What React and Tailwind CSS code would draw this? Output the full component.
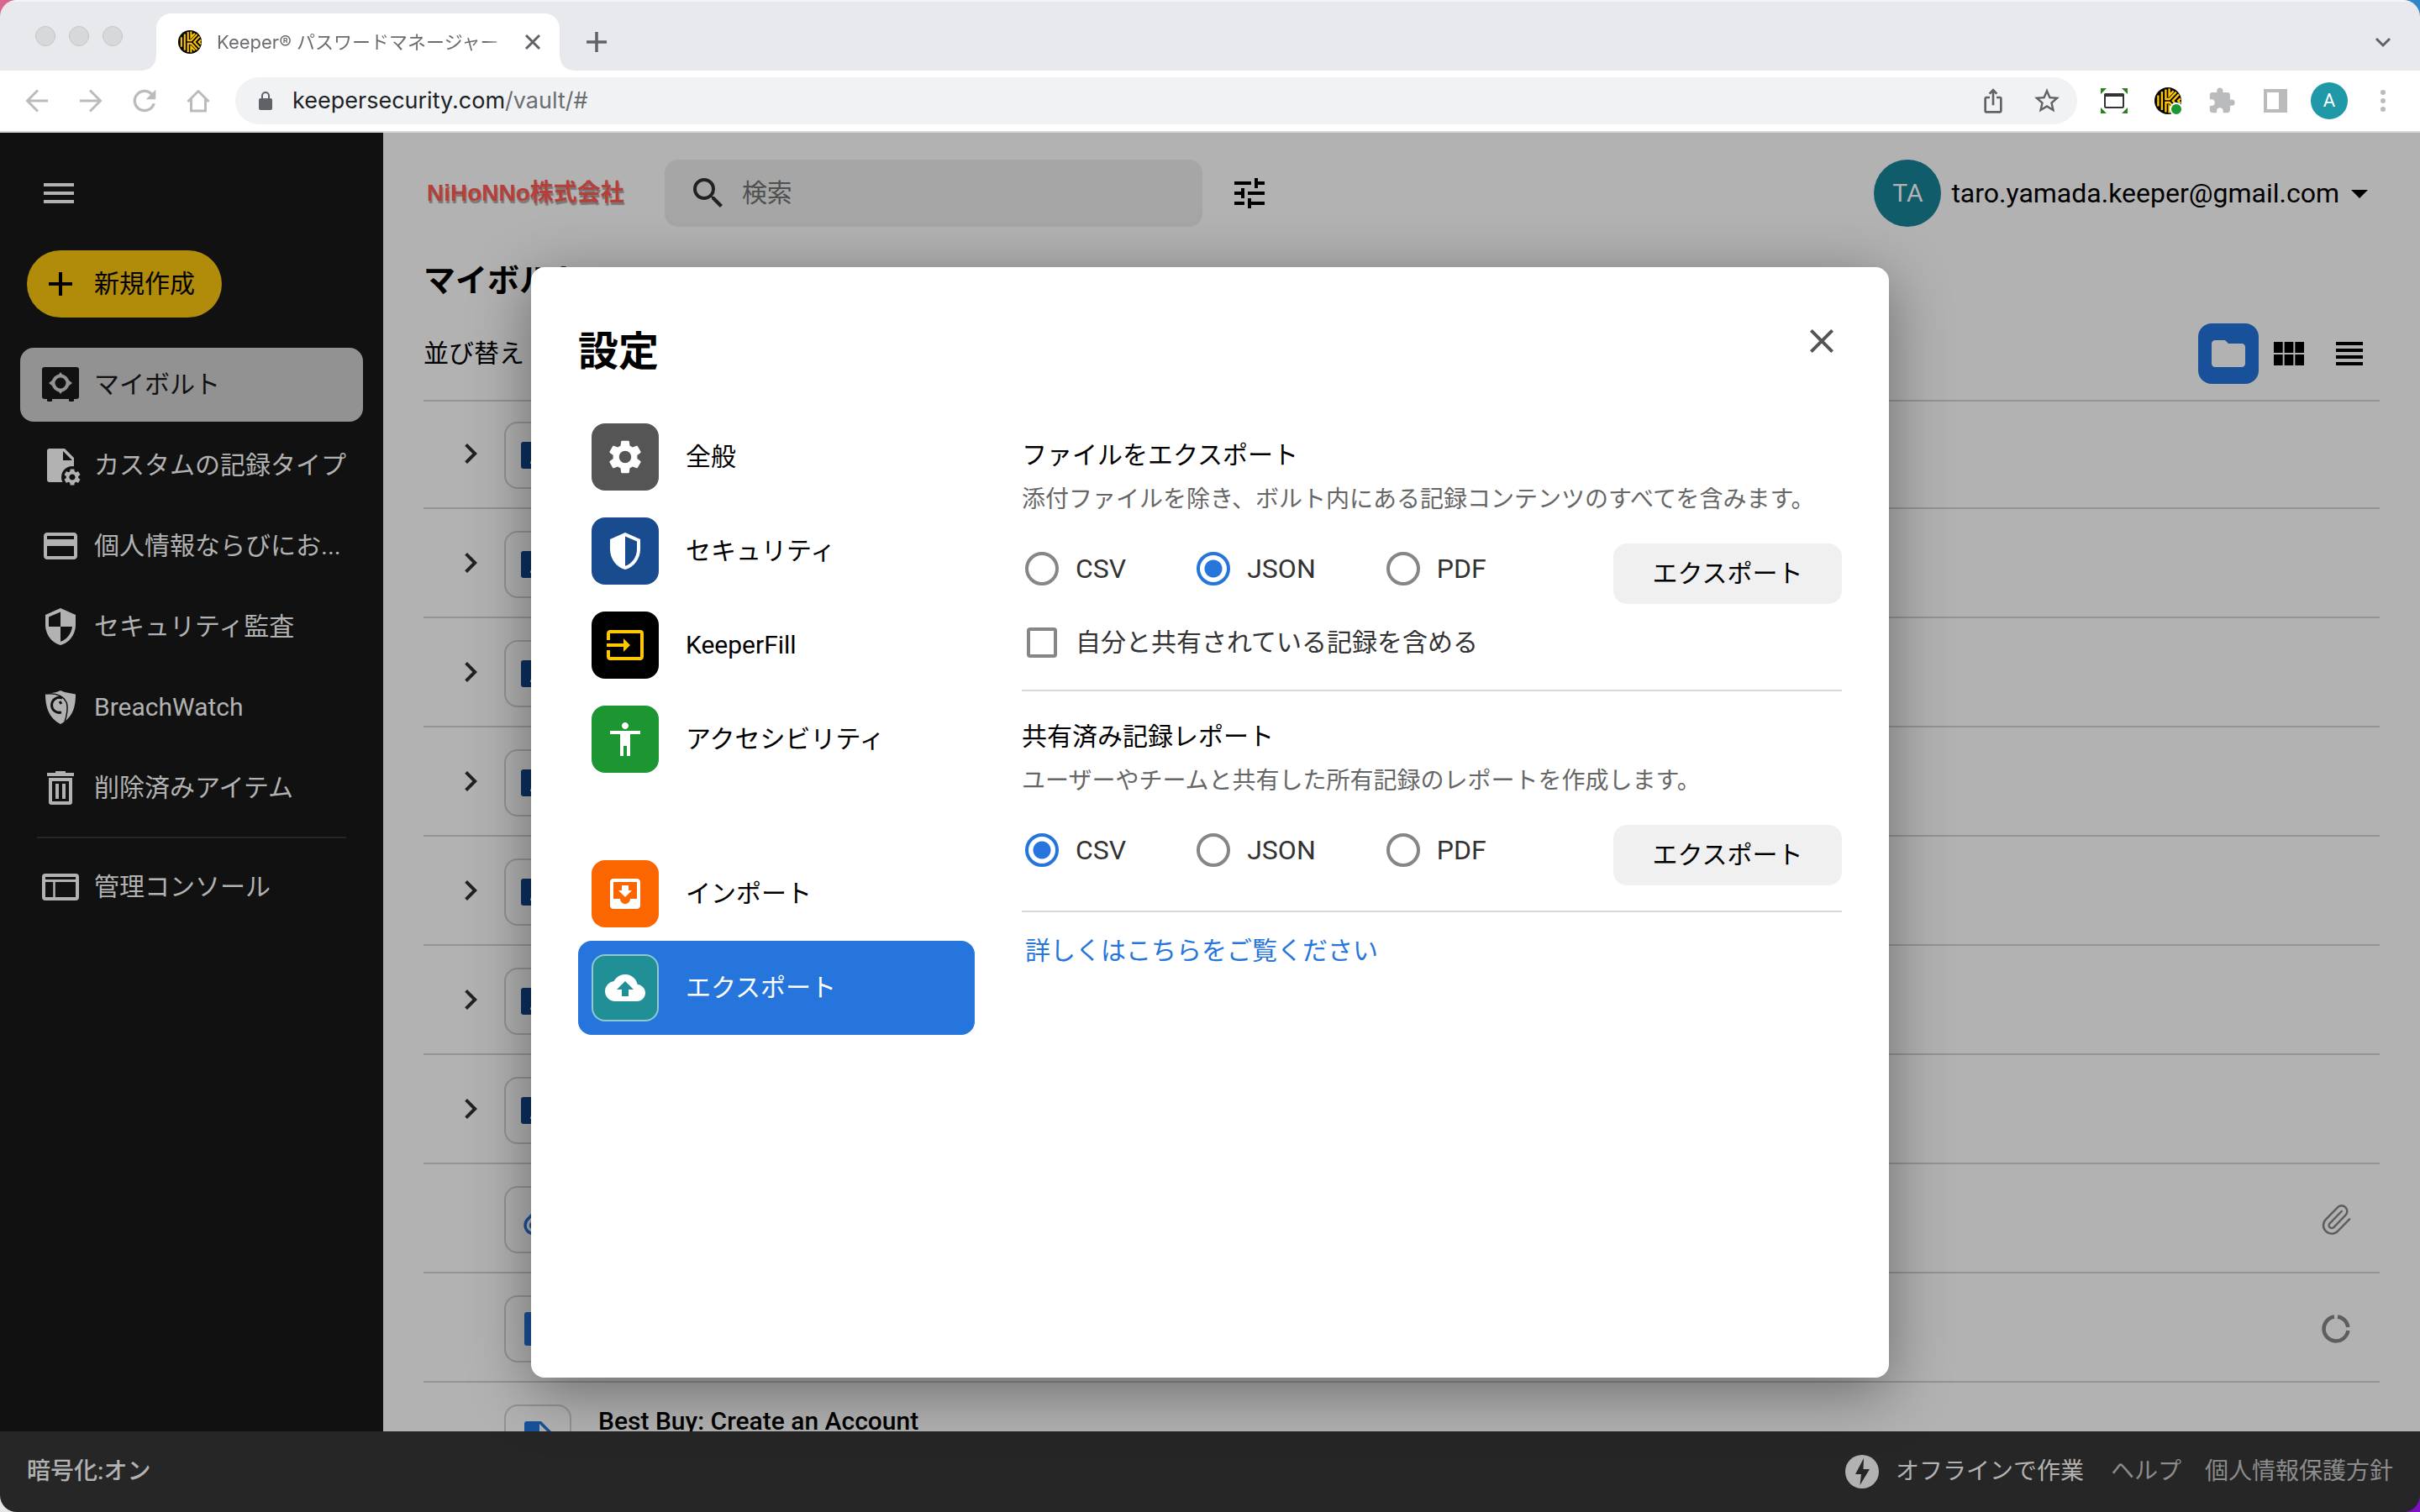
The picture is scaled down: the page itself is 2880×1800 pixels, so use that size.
import React from "react";
import {
  MdMenu,
  MdAdd,
  MdCreditCard,
  MdSecurity,
  MdSettings,
  MdInput,
  MdAccessibility,
  MdMoveToInbox,
  MdBackup,
  MdSearch,
  MdTune,
  MdClose,
  MdFolder,
  MdViewModule,
  MdViewHeadline,
  MdChevronRight,
  MdArrowDropDown,
  MdExtension,
  MdIosShare,
  MdStarBorder,
  MdRefresh,
} from "react-icons/md";
import { Paperclip } from "lucide-react";

/* ---------- drawings ---------- */

function KeeperLogo({ className }) {
  return (
    <svg viewBox="0 0 32 32" className={className} fill="none" stroke="#ffc700" strokeWidth="2.4">
      <circle cx="16" cy="16" r="16" fill="#000" stroke="none" />
      <path d="M4.4 9.5v13M8.9 5v22" />
      <path d="M13.4 2.4V14h4.4l8-8.4" />
      <path d="M13.4 29.6V18h4.4l8 8.4" />
      <path d="M17.6 1.6v8l5-5.4M17.6 30.4v-8l5 5.4" />
      <path d="M29 8.4L21.8 16l7.2 7.6M31 13.2L28.2 16l2.8 2.8" />
    </svg>
  );
}

function ArrowIcon({ className }) {
  return (
    <svg viewBox="0 0 32 32" className={className} fill="none" stroke="currentColor" strokeWidth="3">
      <path d="M29 16H5M17 3.5L4.5 16 17 28.5" />
    </svg>
  );
}

function HomeIcon({ className }) {
  return (
    <svg viewBox="0 0 32 32" className={className} fill="none" stroke="currentColor" strokeWidth="3" strokeLinejoin="round">
      <path d="M3.5 17L16 4.5 28.5 17M7.5 14v14h17V14" />
    </svg>
  );
}

function LockIcon({ className }) {
  return (
    <svg viewBox="0 0 24 24" className={className}>
      <rect x="4" y="9" width="16" height="14" rx="2" fill="currentColor" />
      <path d="M8 10V6a4 4 0 018 0v4" fill="none" stroke="currentColor" strokeWidth="2" />
    </svg>
  );
}

function CaptureIcon({ className }) {
  return (
    <svg viewBox="0 0 32 32" className={className}>
      <path d="M0 1h7L0 8zM32 1h-7l7 7zM0 31h7l-7-7zM32 31h-7l7-7z" fill="#2f8020" />
      <rect x="5" y="8" width="22" height="16" rx="1.5" fill="#fff" stroke="#333" strokeWidth="2" />
      <path d="M4 11V9a2 2 0 012-2h20a2 2 0 012 2v2z" fill="#333" />
    </svg>
  );
}

function SidePanelIcon({ className }) {
  return (
    <svg viewBox="0 0 28 28" className={className}>
      <path fillRule="evenodd" d="M0 0h28v28H0zM4 4v20h14V4z" fill="currentColor" />
    </svg>
  );
}

function DotsIcon({ className }) {
  return (
    <svg viewBox="0 0 32 32" className={className} fill="currentColor">
      <circle cx="16" cy="6" r="3" />
      <circle cx="16" cy="16" r="3" />
      <circle cx="16" cy="26" r="3" />
    </svg>
  );
}

function VaultIcon({ className }) {
  return (
    <svg viewBox="0 0 48 48" className={className}>
      <rect x="2" y="3" width="44" height="38" rx="3" fill="#111" />
      <rect x="8" y="40" width="6" height="4" rx="1" fill="#111" />
      <rect x="34" y="40" width="6" height="4" rx="1" fill="#111" />
      <path d="M24 9l4 5h-8zM24 35l4-5h-8zM10 22l5-4v8zM38 22l-5-4v8z" fill="#929292" />
      <circle cx="24" cy="22" r="8.5" fill="#111" stroke="#929292" strokeWidth="4" />
    </svg>
  );
}

function RecordTypeIcon({ className }) {
  return (
    <svg viewBox="0 0 48 48" className={className}>
      <path fillRule="evenodd" d="M11 4h18l11 11v29H11a3 3 0 01-3-3V7a3 3 0 013-3zM27 7v11h11z" fill="currentColor" />
      <circle cx="38" cy="38" r="13" fill="#111" />
      <svg x="26" y="26" width="24" height="24" viewBox="0 0 24 24" overflow="visible">
        <MdSettings size={24} />
      </svg>
    </svg>
  );
}

function BreachWatchIcon({ className }) {
  return (
    <svg viewBox="0 0 48 48" className={className}>
      <path d="M24 4l5 2 13 2.500C42 23 39 36 24 44 10 37 6 23 6 8.500L19 6z" fill="currentColor" />
      <g fill="none" stroke="#111">
        <path d="M7 8c12-1 20 2 24 10 2.500 6 0 18-2 23" strokeWidth="1.500" />
        <path d="M26 13a9 9 0 10-1 17" strokeWidth="3" />
        <path d="M23 17l2 3" strokeWidth="3" />
      </g>
    </svg>
  );
}

function TrashIcon({ className }) {
  return (
    <svg viewBox="0 0 48 48" className={className} fill="currentColor">
      <path d="M18 4h12v2h10v4H8V6h10z" />
      <path fillRule="evenodd" d="M10 12h28v29a3 3 0 01-3 3H13a3 3 0 01-3-3zM14 16v24h20V16z" />
      <path d="M18 19h4v18h-4zM26 19h4v18h-4z" />
    </svg>
  );
}

function ConsoleIcon({ className }) {
  return (
    <svg viewBox="0 0 48 48" className={className} fill="none" stroke="currentColor">
      <rect x="4" y="10" width="40" height="28" rx="2" strokeWidth="4" />
      <path d="M4 16.500h40" strokeWidth="3" />
      <path d="M16.500 17v20" strokeWidth="2.500" />
    </svg>
  );
}

function HalfShieldIcon({ className }) {
  return (
    <svg viewBox="0 0 24 24" className={className}>
      <path
        fillRule="evenodd"
        d="M12 1L3 5v6c0 5.550 3.840 10.740 9 12 5.160-1.260 9-6.450 9-12V5zM12 3.200l7 3.100V11c0 4.520-2.980 8.690-7 9.930z"
        fill="currentColor"
      />
    </svg>
  );
}

function UsageIcon({ className }) {
  return (
    <svg viewBox="0 0 48 48" className={className} fill="none" stroke="currentColor" strokeWidth="4.500">
      <path d="M26 9.600A14.500 14.500 0 0138.400 22" />
      <path d="M38.400 26A14.500 14.500 0 1122 9.600" />
    </svg>
  );
}

function BoltIcon({ className }) {
  return (
    <svg viewBox="0 0 40 40" className={className}>
      <circle cx="20" cy="20" r="20" fill="currentColor" />
      <path d="M22 4L12 23h7l-1.500 13L29 17h-7.500z" fill="#262626" />
    </svg>
  );
}

function SharedFolderIcon() {
  return (
    <svg viewBox="0 0 40 32" className="h-8 w-10">
      <rect width="40" height="32" rx="3" fill="#0c2f5e" />
      <circle cx="20" cy="13" r="5" fill="#b2b2b2" />
      <path d="M11 26c0-10 18-10 18 0z" fill="#b2b2b2" />
    </svg>
  );
}

function DocumentIcon() {
  return (
    <svg viewBox="0 0 32 40" className="h-10 w-8">
      <path fillRule="evenodd" d="M3 0h17l12 12v25a3 3 0 01-3 3H3a3 3 0 01-3-3V3a3 3 0 013-3zM18 3v11h11z" fill="#185199" />
    </svg>
  );
}

/* ---------- browser frame ---------- */

function TabStrip() {
  return (
    <div className="flex h-[84px] items-end border-t-2 border-[#f4f5f7] bg-[#e8e9ed]">
      <div className="mb-[29px] ml-[42px] flex gap-4">
        <span className="size-6 rounded-full border border-[#c4c5c7] bg-[#d7d8da]" />
        <span className="size-6 rounded-full border border-[#c4c5c7] bg-[#d7d8da]" />
        <span className="size-6 rounded-full border border-[#c4c5c7] bg-[#d7d8da]" />
      </div>
      <span className="ml-6 size-4 bg-[radial-gradient(circle_at_0_0,#e8e9ed_15px,#ffffff_16px)]" />
      <div className="flex h-[68px] w-[480px] items-center rounded-t-[18px] bg-white pr-5 pl-[26px]">
        <KeeperLogo className="size-7 shrink-0" />
        <span className="ml-[18px] min-w-0 flex-1 mask-r-from-92% font-[Inter,'Noto_Sans_CJK_JP',sans-serif] text-[22px] leading-8 whitespace-nowrap text-[#6a6d71]">
          Keeper® パスワードマネージャー
        </span>
        <button aria-label="タブを閉じる" className="ml-4 text-[#5f6368]">
          <svg viewBox="0 0 24 24" className="size-6" fill="none" stroke="currentColor" strokeWidth="3">
            <path d="M4 4l16 16M20 4L4 20" />
          </svg>
        </button>
      </div>
      <span className="size-4 bg-[radial-gradient(circle_at_100%_0,#e8e9ed_15px,#ffffff_16px)]" />
      <button aria-label="新しいタブ" className="mb-5 ml-3.5 text-[#5f6368]">
        <svg viewBox="0 0 28 28" className="size-7" fill="none" stroke="currentColor" strokeWidth="3.500">
          <path d="M14 2v24M2 14h24" />
        </svg>
      </button>
      <button aria-label="タブを検索" className="mr-8 mb-[22px] ml-auto text-[#5f6368]">
        <svg viewBox="0 0 24 24" className="size-6" fill="none" stroke="currentColor" strokeWidth="3">
          <path d="M4 8l8 8 8-8" />
        </svg>
      </button>
    </div>
  );
}

function Toolbar() {
  return (
    <div className="flex h-[74px] items-center border-b-2 border-[#d8d8da] bg-white pr-7 pl-7">
      <div className="flex gap-8 text-[#b9bbbd]">
        <button aria-label="戻る"><ArrowIcon className="size-8" /></button>
        <button aria-label="進む"><ArrowIcon className="size-8 rotate-180" /></button>
        <button aria-label="再読み込み" className="flex size-8 items-center justify-center"><MdRefresh className="size-10 shrink-0" /></button>
        <button aria-label="ホーム"><HomeIcon className="size-8" /></button>
      </div>
      <div className="ml-7 flex h-14 flex-1 items-center rounded-full bg-[#f1f2f4] pr-5 pl-6">
        <LockIcon className="size-6 text-[#5f6368]" />
        <span className="ml-5 flex-1 font-[Inter,sans-serif] text-[27px] leading-8 text-[#202124]">
          keepersecurity.com<span className="text-[#6a6d71]">/vault/#</span>
        </span>
        <div className="flex gap-8 text-[#5f6368]">
          <button aria-label="共有"><MdIosShare className="size-8" /></button>
          <button aria-label="ブックマーク" className="flex size-8 items-center justify-center"><MdStarBorder className="size-9 shrink-0" /></button>
        </div>
      </div>
      <div className="ml-7 flex items-center gap-8 text-[#b9bbbd]">
        <button aria-label="キャプチャ"><CaptureIcon className="size-8" /></button>
        <button aria-label="Keeper" className="relative">
          <KeeperLogo className="size-8" />
          <span className="absolute -right-0.5 -bottom-0.5 size-4 rounded-full border-2 border-white bg-[#1c9632]" />
        </button>
        <button aria-label="拡張機能" className="flex size-8 items-center justify-center"><MdExtension className="size-[34px] shrink-0" /></button>
        <button aria-label="サイドパネル" className="flex size-8 items-center justify-center"><SidePanelIcon className="size-7" /></button>
        <button aria-label="プロフィール" className="-mx-1.5 flex size-11 items-center justify-center rounded-full bg-[#1f98a8] text-[22px] leading-8 text-white">A</button>
        <button aria-label="メニュー"><DotsIcon className="size-8" /></button>
      </div>
    </div>
  );
}

/* ---------- vault ---------- */

const sideItems = [
  { label: "マイボルト", Icon: VaultIcon, selected: true },
  { label: "カスタムの記録タイプ", Icon: RecordTypeIcon },
  { label: "個人情報ならびにお...", Icon: MdCreditCard },
  { label: "セキュリティ監査", Icon: MdSecurity },
  { label: "BreachWatch", Icon: BreachWatchIcon },
  { label: "削除済みアイテム", Icon: TrashIcon },
];

function SideItem({ label, Icon, selected }) {
  return (
    <a
      href="#"
      className={
        selected
          ? "flex h-[88px] items-center gap-4 rounded-2xl bg-[#929292] px-6 text-[#111]"
          : "flex h-[88px] items-center gap-4 px-6"
      }
    >
      <Icon className="size-12 shrink-0" />
      <span className="whitespace-nowrap">{label}</span>
    </a>
  );
}

function Sidebar() {
  return (
    <aside className="flex w-[456px] shrink-0 flex-col bg-[#111] px-6 text-[#b2b2b2]">
      <button aria-label="メニュー" className="mt-12 ml-[22px] self-start"><MdMenu className="size-12" /></button>
      <button className="mt-11 ml-2 flex h-20 w-[232px] items-center gap-4 rounded-full bg-[#b08c0a] pl-4 text-black">
        <MdAdd className="size-12" />
        <span>新規作成</span>
      </button>
      <nav className="mt-9 flex flex-col gap-2">
        {sideItems.map((item) => (
          <SideItem key={item.label} {...item} />
        ))}
      </nav>
      <hr className="mx-5 my-3.5 border-t-2 border-[#262626]" />
      <SideItem label="管理コンソール" Icon={ConsoleIcon} />
    </aside>
  );
}

const rows = [
  { kind: "folder" },
  { kind: "folder" },
  { kind: "folder" },
  { kind: "folder" },
  { kind: "folder" },
  { kind: "folder" },
  { kind: "folder" },
  { kind: "attachment", clip: true },
  { kind: "document", usage: true },
  { kind: "document", title: "Best Buy: Create an Account" },
];

function Row({ kind, clip, usage, title }) {
  return (
    <li className="flex h-[130px] shrink-0 items-end border-b-2 border-[#939393] pb-[22px] pl-8 first:h-32">
      <div className="flex h-20 w-16 items-center pb-1">
        {kind === "folder" && (
          <button aria-label="フォルダを開く" className="text-[#222]"><MdChevronRight className="size-12" /></button>
        )}
      </div>
      <div className="flex size-20 items-center justify-center rounded-2xl border-2 border-[#939393]">
        {kind === "folder" && <SharedFolderIcon />}
        {kind === "attachment" && <Paperclip className="size-10 text-[#185199]" />}
        {kind === "document" && <DocumentIcon />}
      </div>
      {title && <span className="ml-8 self-start pt-[30px] leading-8 font-medium">{title}</span>}
      <div className="mr-7 ml-auto flex h-20 items-center text-[#5e5e5e]">
        {clip && <Paperclip className="mr-1 size-10" strokeWidth={1.5} />}
        {usage && <UsageIcon className="size-12" />}
      </div>
    </li>
  );
}

function Main() {
  return (
    <main className="flex min-w-0 flex-1 flex-col overflow-hidden bg-[#b2b2b2] px-12 text-black">
      <header className="mt-8 flex h-20 shrink-0 items-center">
        <span className="ml-1 font-['Liberation_Sans','Noto_Sans_CJK_JP',sans-serif] text-[28px] leading-10 font-bold text-[#b5403a] [text-shadow:1px_3px_1px_#777]">
          NiHoNNo株式会社
        </span>
        <label className="ml-12 flex h-20 w-[640px] items-center rounded-2xl bg-[#a6a6a6] pl-7">
          <MdSearch className="size-12 text-[#222]" />
          <input aria-label="検索" placeholder="検索" className="ml-4 flex-1 bg-transparent outline-none placeholder:text-[#505050]" />
        </label>
        <button aria-label="フィルター" className="ml-8"><MdTune className="size-12" /></button>
        <div className="ml-auto flex items-center">
          <span className="flex size-20 items-center justify-center rounded-full bg-[#115c6a] text-[#b2b2b2]">TA</span>
          <button className="ml-3 flex items-center text-[32px]">
            taro.yamada.keeper@gmail.com
            <MdArrowDropDown className="size-12" />
          </button>
        </div>
      </header>
      <h1 className="mt-[38px] text-[38px] leading-[52px] font-bold">マイボルト</h1>
      <div className="flex h-[118px] shrink-0 items-center border-b-2 border-[#939393] pt-1.5">
        <span>並び替え</span>
        <div className="ml-auto flex">
          <button aria-label="フォルダ表示" className="flex size-[72px] items-center justify-center rounded-2xl bg-[#185199] text-[#b2b2b2]"><MdFolder className="size-12" /></button>
          <button aria-label="グリッド表示" className="flex size-[72px] items-center justify-center"><MdViewModule className="size-12" /></button>
          <button aria-label="リスト表示" className="flex size-[72px] items-center justify-center"><MdViewHeadline className="size-12" /></button>
        </div>
      </div>
      <ul className="flex min-h-0 flex-1 flex-col overflow-hidden">
        {rows.map((row, i) => (
          <Row key={i} {...row} />
        ))}
      </ul>
    </main>
  );
}

function Footer() {
  return (
    <footer className="flex h-24 shrink-0 items-center bg-[#262626] px-8 text-[28px] text-[#b2b2b2]">
      <span className="font-medium">暗号化:オン</span>
      <button className="ml-auto flex items-center gap-5">
        <BoltIcon className="size-10" />
        オフラインで作業
      </button>
      <a href="#" className="ml-8 text-[#8c8c8c]">ヘルプ</a>
      <a href="#" className="ml-7 text-[#8c8c8c]">個人情報保護方針</a>
    </footer>
  );
}

/* ---------- settings dialog ---------- */

const settingsItems = [
  { label: "全般", Icon: MdSettings, tile: "bg-[#555] text-white" },
  { label: "セキュリティ", Icon: HalfShieldIcon, tile: "bg-[#194c8f] text-white" },
  { label: "KeeperFill", Icon: MdInput, tile: "bg-black text-[#ffc700]" },
  { label: "アクセシビリティ", Icon: MdAccessibility, tile: "bg-[#1c9632] text-white" },
];

const transferItems = [
  { label: "インポート", Icon: MdMoveToInbox, tile: "bg-[#fc6600] text-white" },
  { label: "エクスポート", Icon: MdBackup, tile: "bg-[#209096] text-white border-2 border-[#90c8cf]", selected: true },
];

function SettingsItem({ label, Icon, tile, selected }) {
  return (
    <button
      className={
        selected
          ? "flex h-28 items-center gap-8 rounded-2xl bg-[#2675dc] px-4 text-white"
          : "flex h-28 items-center gap-8 px-4"
      }
    >
      <span className={"flex size-20 shrink-0 items-center justify-center rounded-2xl " + tile}>
        <Icon className="size-12" />
      </span>
      {label}
    </button>
  );
}

function ExportForm({ name, title, description, selected, children }) {
  return (
    <section className="border-b-2 border-[#d8d8d8] pb-[30px]">
      <h3 className="leading-[52px]">{title}</h3>
      <p className="text-[28px] leading-[54px] text-[#666]">{description}</p>
      <div className="mt-[25px] flex justify-between">
        <div className="flex h-[60px] items-center gap-20 text-[32px] text-[#333]">
          {["CSV", "JSON", "PDF"].map((format) => (
            <label key={format} className="flex items-center gap-5 pl-1">
              <input
                type="radio"
                name={name}
                defaultChecked={format === selected}
                className="size-10 appearance-none rounded-full border-4 border-[#868686] checked:border-[#2675dc] checked:bg-[radial-gradient(circle,#2675dc_10px,transparent_11px)]"
              />
              {format}
            </label>
          ))}
        </div>
        <button className="h-[72px] w-[272px] rounded-2xl bg-[#f0f0f0]">エクスポート</button>
      </div>
      {children}
    </section>
  );
}

function SettingsDialog() {
  return (
    <div className="absolute inset-0 flex justify-center py-40">
      <div
        role="dialog"
        aria-label="設定"
        className="flex w-[1616px] max-w-full flex-col rounded-2xl bg-white px-14 pt-[60px] text-black shadow-[0_16px_72px_rgba(0,0,0,0.4)]"
      >
        <div className="flex justify-between">
          <h2 className="text-[48px] leading-[82px] font-bold">設定</h2>
          <button aria-label="閉じる" className="h-14 text-[#555]"><MdClose className="size-12" /></button>
        </div>
        <div className="mt-7 flex">
          <nav className="flex w-[472px] flex-col">
            {settingsItems.map((item) => (
              <SettingsItem key={item.label} {...item} />
            ))}
            <div className="mt-[72px] flex flex-col">
              {transferItems.map((item) => (
                <SettingsItem key={item.label} {...item} />
              ))}
            </div>
          </nav>
          <div className="ml-14 flex-1 pt-7">
            <ExportForm
              name="file-format"
              title="ファイルをエクスポート"
              description="添付ファイルを除き、ボルト内にある記録コンテンツのすべてを含みます。"
              selected="JSON"
            >
              <label className="mt-5 flex h-[52px] items-center gap-[22px] pl-1.5 text-[#333]">
                <input type="checkbox" className="size-9 appearance-none rounded border-4 border-[#868686]" />
                自分と共有されている記録を含める
              </label>
            </ExportForm>
            <div className="h-7" />
            <ExportForm
              name="report-format"
              title="共有済み記録レポート"
              description="ユーザーやチームと共有した所有記録のレポートを作成します。"
              selected="CSV"
            />
            <a href="#" className="mt-6 ml-1 inline-block text-[#2675dc]">詳しくはこちらをご覧ください</a>
          </div>
        </div>
      </div>
    </div>
  );
}

export default function App() {
  return (
    <div className="h-screen bg-[radial-gradient(circle_at_0_0,#d9668c_60px,transparent_60px),radial-gradient(circle_at_100%_0,#2f86c8_60px,transparent_60px),radial-gradient(circle_at_100%_100%,#7d0fc4_60px,transparent_60px)] bg-[#e6e6e6] font-[Roboto,'Noto_Sans_CJK_JP',sans-serif] text-[30px] leading-[44px]">
      <div className="flex h-full flex-col overflow-hidden rounded-[20px]">
        <TabStrip />
        <Toolbar />
        <div className="relative flex min-h-0 flex-1 flex-col">
          <div className="flex min-h-0 flex-1">
            <Sidebar />
            <Main />
          </div>
          <Footer />
          <SettingsDialog />
        </div>
      </div>
    </div>
  );
}
